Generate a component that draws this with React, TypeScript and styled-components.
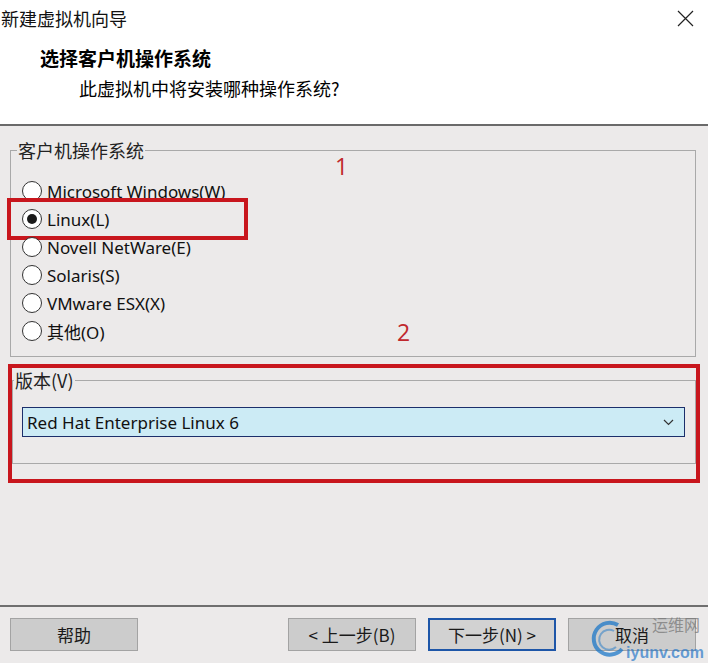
import React from "react";
import styled, {createGlobalStyle} from "styled-components";

const GlobalStyle = createGlobalStyle`
    html, body {
        margin: 0;
        padding: 0;
        background: #ECEAEA;
    }
    body {
        font-family: "Noto Sans", "Noto Sans CJK SC", sans-serif;
    }
`;

const CJK = `"Noto Sans CJK SC", "Noto Sans", sans-serif`;
const RED = "#C8161D";

const Window = styled.div`
    position: relative;
    display: flex;
    flex-direction: column;
    width: 708px;
    height: 663px;
    overflow: hidden;
    background: #ECEAEA;
    color: #000;
`;

const Header = styled.div`
    height: 124px;
    background: #FFFFFF;
    border-bottom: 2px solid #6A6A6A;
`;

const TitleBar = styled.div`
    display: flex;
    align-items: center;
    justify-content: space-between;
    height: 36px;
    padding: 0 14px 0 1px;
`;

const WindowTitle = styled.span`
    font-family: ${CJK};
    font-size: 18px;
    color: #111;
`;

const CloseIcon = styled.svg`
    width: 17px;
    height: 17px;
`;

const Heading = styled.div`
    margin-top: 10px;
    padding-left: 40px;
    font-family: ${CJK};
    font-size: 19px;
    font-weight: 700;
    line-height: 24px;
`;

const SubHeading = styled.div`
    margin-top: 6px;
    padding-left: 79px;
    font-family: ${CJK};
    font-size: 18px;
    line-height: 24px;
`;

const Body = styled.div`
    flex: 1;
    display: flex;
    flex-direction: column;
    padding: 12px 12px 0 10px;
`;

const GroupBox = styled.fieldset<{$padBottom: number; $padLeft: number}>`
    position: relative;
    margin: 0;
    padding: 15px 10px ${p => p.$padBottom}px ${p => p.$padLeft}px;
    border: 1px solid #A9A9A9;
    min-width: 0;
`;

const Legend = styled.legend<{$offset: number}>`
    margin-left: ${p => p.$offset}px;
    padding: 0 1px;
    font-family: ${CJK};
    font-size: 18px;
    line-height: 24px;
    color: #222;
`;

const RadioList = styled.div`
    display: flex;
    flex-direction: column;
`;

const RadioRow = styled.label`
    position: relative;
    display: flex;
    align-items: center;
    gap: 5px;
    height: 28px;
    font-size: 17px;
    color: #111;
`;

const RadioCircle = styled.span<{$checked?: boolean}>`
    display: flex;
    align-items: center;
    justify-content: center;
    box-sizing: border-box;
    width: 20px;
    height: 20px;
    border-radius: 50%;
    border: 1px solid #333;
    background: #FFFFFF;
    &::after {
        content: "";
        display: ${p => (p.$checked ? "block" : "none")};
        width: 10px;
        height: 10px;
        border-radius: 50%;
        background: #1A1A1A;
    }
`;

const Highlight = styled.span`
    position: absolute;
    left: -15px;
    top: -7px;
    width: 241px;
    height: 42px;
    box-sizing: border-box;
    border: 4px solid ${RED};
    pointer-events: none;
`;

const Marker = styled.span<{$x: number; $y: number}>`
    position: absolute;
    left: ${p => p.$x}px;
    top: ${p => p.$y}px;
    font-family: "Open Sans", sans-serif;
    font-size: 23px;
    line-height: 1;
    color: #C0282D;
`;

const Annotated = styled.div`
    margin: 7px -4px 0 -2px;
    padding-bottom: 15px;
    border: 4px solid ${RED};
`;

const SelectBox = styled.div`
    display: flex;
    align-items: center;
    justify-content: space-between;
    box-sizing: border-box;
    height: 30px;
    padding: 0 10px 0 4px;
    background: #CCEBF5;
    border: 1px solid #1C2F6B;
    font-size: 17px;
    color: #111;
`;

const Chevron = styled.svg`
    width: 11px;
    height: 7px;
`;

const Footer = styled.div`
    display: flex;
    align-items: center;
    gap: 12px;
    height: 58px;
    padding: 0 12px 0 10px;
    border-top: 2px solid #6F6F6F;
    box-sizing: border-box;
`;

const Spacer = styled.div`
    flex: 1;
`;

const Button = styled.button<{$focused?: boolean}>`
    box-sizing: border-box;
    width: 128px;
    height: 33px;
    margin-top: -2px;
    padding: 0;
    background: ${p => (p.$focused ? "#D2D2D2" : "#CCCCCC")};
    border: ${p => (p.$focused ? "2px solid #1E56A8" : "1px solid #A3A3A3")};
    font-family: ${CJK};
    font-size: 17px;
    color: #1A1A1A;
`;

const Watermark = styled.div`
    position: absolute;
    right: 4px;
    bottom: 2px;
    width: 140px;
    height: 46px;
    pointer-events: none;
`;

const WatermarkTop = styled.span`
    position: absolute;
    right: 4px;
    top: 0;
    font-family: ${CJK};
    font-size: 16px;
    line-height: 18px;
    color: rgba(120, 120, 120, 0.75);
`;

const WatermarkBottom = styled.span`
    position: absolute;
    right: 0;
    bottom: 0;
    font-family: "Liberation Sans", sans-serif;
    font-size: 16px;
    line-height: 16px;
    font-weight: 700;
    color: rgba(40, 120, 200, 0.7);
`;

const WatermarkSwirl = styled.svg`
    position: absolute;
    left: 24px;
    top: 4px;
    width: 40px;
    height: 40px;
`;

const osList = [
    "Microsoft Windows(W)",
    "Linux(L)",
    "Novell NetWare(E)",
    "Solaris(S)",
    "VMware ESX(X)",
    "其他(O)",
];

const App = () => {
    const selected = "Linux(L)";

    return (
        <Window>
            <GlobalStyle/>
            <Header>
                <TitleBar>
                    <WindowTitle>新建虚拟机向导</WindowTitle>
                    <CloseIcon viewBox="0 0 17 17">
                        <path d="M1 1 L16 16 M16 1 L1 16" stroke="#222" strokeWidth="1.2" fill="none"/>
                    </CloseIcon>
                </TitleBar>
                <Heading>选择客户机操作系统</Heading>
                <SubHeading>此虚拟机中将安装哪种操作系统?</SubHeading>
            </Header>

            <Body>
                <GroupBox $padBottom={11} $padLeft={11}>
                    <Legend $offset={-5}>客户机操作系统</Legend>
                    <Marker $x={324} $y={-7}>1</Marker>
                    <Marker $x={386} $y={159}>2</Marker>
                    <RadioList>
                        {osList.map(name => (
                            <RadioRow key={name}>
                                <RadioCircle $checked={name === selected}/>
                                {name}
                                {name === selected && <Highlight/>}
                            </RadioRow>
                        ))}
                    </RadioList>
                </GroupBox>

                <Annotated>
                    <GroupBox $padBottom={26} $padLeft={9}>
                        <Legend $offset={-8}>版本(V)</Legend>
                        <SelectBox>
                            Red Hat Enterprise Linux 6
                            <Chevron viewBox="0 0 11 7">
                                <path d="M1 1 L5.5 5.5 L10 1" stroke="#333" strokeWidth="1.2" fill="none"/>
                            </Chevron>
                        </SelectBox>
                    </GroupBox>
                </Annotated>
            </Body>

            <Footer>
                <Button>帮助</Button>
                <Spacer/>
                <Button>&lt; 上一步(B)</Button>
                <Button $focused>下一步(N) &gt;</Button>
                <Button>取消</Button>
            </Footer>

            <Watermark>
                <WatermarkSwirl viewBox="0 0 40 40">
                    <path d="M30 6 A16 16 0 1 0 34 30" stroke="rgba(30,120,200,0.75)" strokeWidth="4" fill="none"/>
                    <path d="M26 12 A10 10 0 1 0 28 28" stroke="rgba(30,120,200,0.5)" strokeWidth="2" fill="none"/>
                </WatermarkSwirl>
                <WatermarkTop>运维网</WatermarkTop>
                <WatermarkBottom>iyunv.com</WatermarkBottom>
            </Watermark>
        </Window>
    );
}

export default App;
